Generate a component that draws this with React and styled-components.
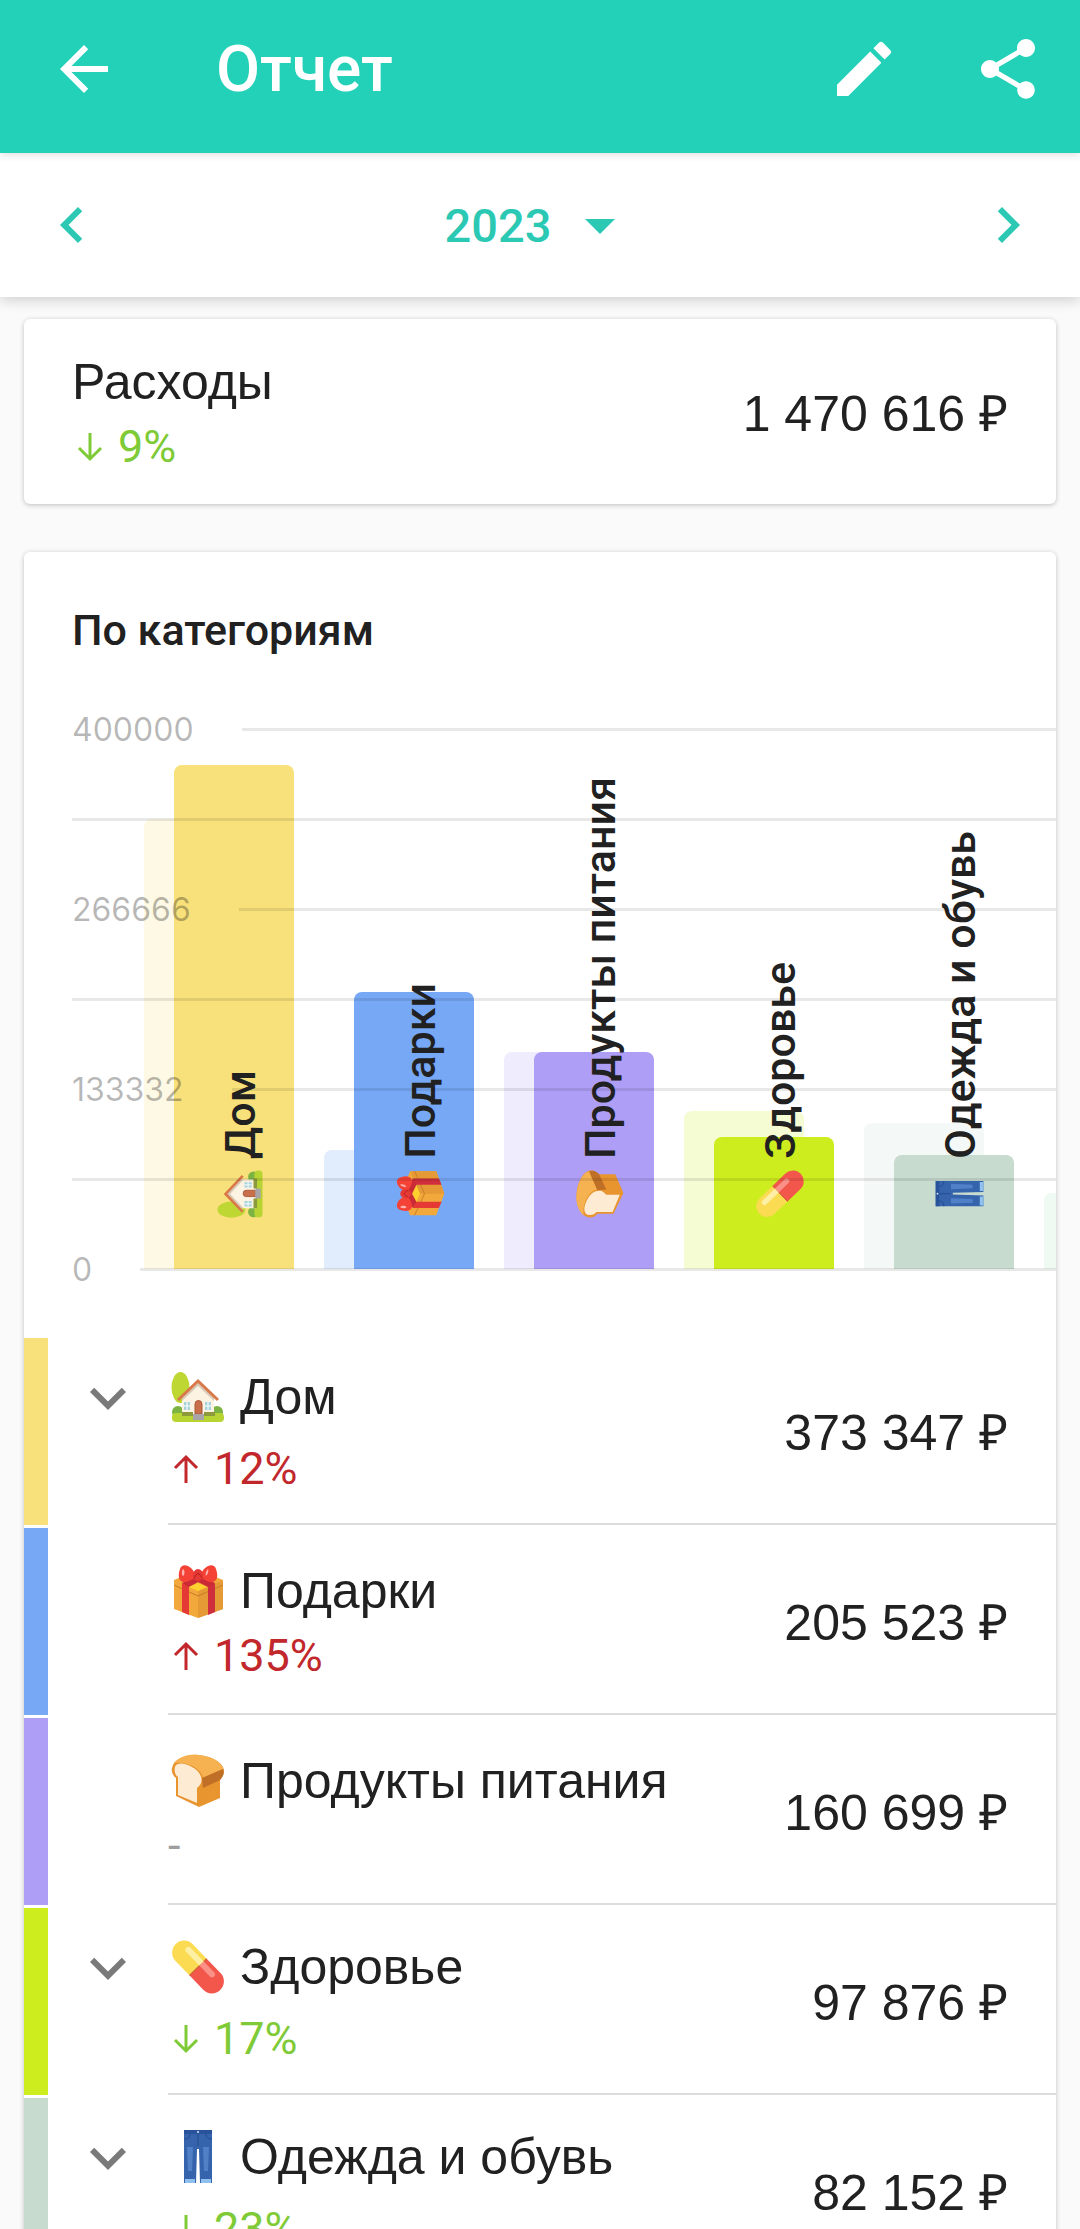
import React from "react";
import styled, { createGlobalStyle } from "styled-components";
import {
	MdArrowBack,
	MdArrowDropDown,
	MdChevronLeft,
	MdChevronRight,
	MdEdit,
	MdExpandMore,
	MdShare,
} from "react-icons/md";

const MAX_VALUE = 400000;

const ticks = ["400000", "", "266666", "", "133332", "", "0"];

const House = () => (
	<>
		<ellipse cx="12.5" cy="18.5" rx="9" ry="15.5" fill="#bfd732" />
		<circle cx="10" cy="43" r="6" fill="#7cb342" />
		<circle cx="49" cy="43" r="6" fill="#7cb342" />
		<rect x="4" y="44" width="52" height="9" rx="4" fill="#b8d432" />
		<path d="M14 46V29L30 13l16 16v17z" fill="#fdf3e3" />
		<path d="M14 32 30 17l16 15v-4L30 12 14 28z" fill="#d9cbb8" />
		<path d="M10 31 30 12l20 19" fill="none" stroke="#d9794a" strokeWidth="3" />
		<path d="M16 33h6v8h-6zM37 33h6v8h-6z" fill="#a9d3dc" />
		<path d="M19 33v8M16 37h6M40 33v8M37 37h6" stroke="#fff" strokeWidth="1" />
		<path d="M27 45V35a3 3 0 0 1 7 0v10z" fill="#c96f4a" stroke="#a9573a" strokeWidth="1" />
		<path d="M14 43h11v4H14zM36 43h11v4H36z" fill="#8d9a3c" />
		<path d="M25 45h11v6H25z" fill="#a9a4a8" />
	</>
);

const Gift = () => (
	<>
		<path d="M6 17 30 7l25 10v29L30 55 6 46z" fill="#f2a83b" />
		<path d="M30 28 55 17v29L30 55z" fill="#e59a35" />
		<path d="M6 22l24 11 25-11" fill="none" stroke="#c97b26" strokeWidth="1" />
		<path d="M14 20l7 3v29l-7-3z" fill="#e53935" />
		<path d="M40 23l7-3v29l-7 3z" fill="#cf2f3c" />
		<path d="M14 20l16-7 17 7-7 4-10-5-9 5z" fill="#c92a35" />
		<path d="M21 24l9-4 9 4-9 4z" fill="#ffd02e" />
		<path d="M28 14C25 2 14-1 12 6c-2 6-2 11 3 13 5 1 9-3 13-5z" fill="#f44336" />
		<path d="M32 14C35 2 46-1 48 6c2 6 2 11-3 13-5 1-9-3-13-5z" fill="#f44336" />
		<ellipse cx="30" cy="12" rx="5" ry="6" fill="#e53935" />
		<path d="M15 6c-2 3-1 6 0 7 2-1 2-6 0-7zM40 6c-2 2-3 5-2 7 2-2 3-5 2-7z" fill="#ffb3ad" />
		<path d="M26 15c1-2 3-4 4-5M34 15c-1-2-3-4-4-5" stroke="#b71c1c" fill="none" />
	</>
);

const Bread = () => (
	<>
		<path
			d="M4 15C6 6 18 1 30 2c14 1 26 8 26 16 0 5-3 7-4 9v18L31 54 8 43V25c-3-2-5-6-4-10z"
			fill="#e8942f"
		/>
		<path d="M6 10C12 3 22 1 30 2c13 1 24 7 25 14L35 25C34 16 20 8 6 10z" fill="#f6b250" />
		<path d="M34 25l21-9c2 5-1 9-3 11l-17 8z" fill="#bf6f26" />
		<path
			d="M7 14c2-5 10-4 17 0 8 4 12 12 8 18l-3 3v15L10 42V24c-3-2-4-6-3-10z"
			fill="#fdebd3"
		/>
	</>
);

const Pill = () => (
	<g transform="translate(30 28) rotate(46)">
		<path d="M0-12h-20a12 12 0 0 0 0 24H0z" fill="#fadb52" />
		<path d="M0-12h20a12 12 0 0 1 0 24H0z" fill="#f3564b" />
		<path d="M0-12v24" stroke="#c8642f" strokeWidth="1" />
		<path d="M-19-8H0v6h-19a3 3 0 0 1 0-6z" fill="#fdf0a4" />
		<path d="M0-8h15a3 3 0 0 1 0 6H0z" fill="#fb9086" />
	</g>
);

const Jeans = () => (
	<>
		<path d="M16 1h28v53H32l-1-34h-2l-1 34H16z" fill="#3564ad" />
		<path d="M19 18h6l-1 24h-4zM35 18h6l-1 24h-4z" fill="#5080c6" />
		<path d="M16 1h28v4H16z" fill="#28539a" />
		<path d="M17 50h10v4H17zM33 50h10v4H33z" fill="#8fc0ee" />
		<path d="M30 5v12M16 10c4 0 6-2 6-5M44 10c-4 0-6-2-6-5" stroke="#234a8c" fill="none" />
		<circle cx="30" cy="3" r="1" fill="#dfe8f5" />
	</>
);

const categories = [
	{
		name: "Дом",
		Emoji: House,
		value: 373347,
		previous: 333350,
		trend: "up",
		percent: "12%",
		amount: "373 347 ₽",
		color: "#f8e07b",
		pale: "#fdf9e4",
		expandable: true,
	},
	{
		name: "Подарки",
		Emoji: Gift,
		value: 205523,
		previous: 88200,
		trend: "up",
		percent: "135%",
		amount: "205 523 ₽",
		color: "#76a8f5",
		pale: "#e1edfc",
	},
	{
		name: "Продукты питания",
		Emoji: Bread,
		value: 160699,
		previous: 160699,
		amount: "160 699 ₽",
		color: "#ae9ef5",
		pale: "#efecfd",
	},
	{
		name: "Здоровье",
		Emoji: Pill,
		value: 97876,
		previous: 117100,
		trend: "down",
		percent: "17%",
		amount: "97 876 ₽",
		color: "#cded1e",
		pale: "#f5fbd2",
		expandable: true,
	},
	{
		name: "Одежда и обувь",
		Emoji: Jeans,
		value: 84152,
		previous: 108400,
		trend: "down",
		percent: "23%",
		amount: "82 152 ₽",
		color: "#c7dbcf",
		pale: "#f4f8f6",
		expandable: true,
	},
];

const barHeight = (value) => ({ height: `${(value / MAX_VALUE) * 100}%` });

const Trend = ({ trend, percent }) => {
	if (!trend) return <TrendLine>-</TrendLine>;
	return (
		<TrendLine $trend={trend}>
			<svg width="36" height="36" viewBox="0 0 36 36" aria-hidden="true">
				<path d={trend === "up" ? "M18 32V6M7 17 18 6l11 11" : "M18 4v26M7 19l11 11 11-11"} />
			</svg>
			{percent}
		</TrendLine>
	);
};

const App = () => {
	return (
		<Screen>
			<GlobalStyle />
			<Header>
				<IconButton aria-label="Назад">
					<MdArrowBack />
				</IconButton>
				<h1>Отчет</h1>
				<IconButton aria-label="Изменить">
					<MdEdit />
				</IconButton>
				<IconButton aria-label="Поделиться">
					<MdShare />
				</IconButton>
			</Header>
			<PeriodBar>
				<IconButton aria-label="Предыдущий год">
					<MdChevronLeft />
				</IconButton>
				<YearPicker>
					<select aria-label="Год" defaultValue="2023">
						<option>2023</option>
						<option>2022</option>
					</select>
					<MdArrowDropDown />
				</YearPicker>
				<IconButton aria-label="Следующий год">
					<MdChevronRight />
				</IconButton>
			</PeriodBar>
			<Content>
				<Card>
					<Summary>
						<div>
							<Name>Расходы</Name>
							<Trend trend="down" percent="9%" />
						</div>
						<Amount>1 470 616 ₽</Amount>
					</Summary>
				</Card>
				<Card>
					<CardTitle>По категориям</CardTitle>
					<Chart>
						<Bars>
							{categories.map(({ name, Emoji, value, previous, color, pale }) => (
								<BarGroup key={name}>
									<PreviousBar $color={pale} style={barHeight(previous)} />
									<Bar $color={color} style={barHeight(value)} />
									<BarLabel>
										<svg viewBox="0 0 60 56" aria-hidden="true">
											<Emoji />
										</svg>
										{name}
									</BarLabel>
								</BarGroup>
							))}
							<BarGroup>
								<PreviousBar $color="#eefaf2" style={barHeight(56000)} />
							</BarGroup>
						</Bars>
						<Axis>
							{ticks.map((tick, index) => (
								<Tick key={index}>
									{tick && <span>{tick}</span>}
									<i />
								</Tick>
							))}
						</Axis>
					</Chart>
					<List>
						{categories.map(({ name, Emoji, trend, percent, amount, color, expandable }) => (
							<Row key={name} $color={color}>
								<ExpandCell>
									{expandable && (
										<IconButton aria-label={`Развернуть: ${name}`}>
											<MdExpandMore />
										</IconButton>
									)}
								</ExpandCell>
								<RowBody>
									<div>
										<Name $spaced={expandable}>
											<svg viewBox="0 0 60 56" aria-hidden="true">
												<Emoji />
											</svg>
											{name}
										</Name>
										<Trend trend={trend} percent={percent} />
									</div>
									<Amount>{amount}</Amount>
								</RowBody>
							</Row>
						))}
					</List>
				</Card>
			</Content>
		</Screen>
	);
};

// # STYLED COMPONENT

const GlobalStyle = createGlobalStyle`
	* {
		box-sizing: border-box;
	}
	body {
		margin: 0;
		background: #fafafa;
		color: #212121;
		font-family: Roboto, "Liberation Sans", sans-serif;
	}
	h1, h2, p, ul {
		margin: 0;
		padding: 0;
	}
`;

const Screen = styled.div`
	height: 100vh;
	display: flex;
	flex-direction: column;
	overflow: hidden;
`;

const IconButton = styled.button`
	display: flex;
	flex: none;
	padding: 0;
	border: none;
	background: none;
	color: inherit;
	font-size: 72px;
	cursor: pointer;
`;

const Header = styled.header`
	flex: none;
	height: 153px;
	padding: 0 36px 15px 48px;
	display: flex;
	align-items: center;
	gap: 72px;
	background: #23d1b8;
	color: #fff;
	box-shadow: 0 2px 8px rgba(0, 0, 0, 0.12);
	z-index: 2;

	h1 {
		flex: 1;
		margin-left: 24px;
		font-size: 64px;
		font-weight: 500;
	}
`;

const PeriodBar = styled.nav`
	flex: none;
	height: 144px;
	padding: 0 36px;
	display: flex;
	align-items: center;
	justify-content: space-between;
	background: #fff;
	color: #2bc9b4;
	box-shadow: 0 2px 14px rgba(0, 0, 0, 0.2);
	z-index: 1;
`;

const YearPicker = styled.div`
	display: flex;
	align-items: center;
	gap: 12px;
	font-size: 72px;

	select {
		appearance: none;
		padding: 0;
		border: none;
		background: none;
		color: inherit;
		font: 500 47px Roboto, sans-serif;
	}
`;

const Content = styled.main`
	flex: 1;
	min-height: 0;
	padding: 22px 24px;
	overflow-y: auto;
	scrollbar-width: none;
	display: flex;
	flex-direction: column;
	gap: 48px;
`;

const Card = styled.section`
	flex: none;
	border-radius: 6px;
	background: #fff;
	box-shadow: 0 1px 5px rgba(0, 0, 0, 0.24);
	overflow: hidden;
`;

const Summary = styled.div`
	height: 185px;
	padding: 0 48px;
	display: flex;
	align-items: center;
	justify-content: space-between;
`;

const Name = styled.p`
	display: flex;
	align-items: center;
	gap: 12px;
	margin-bottom: ${({ $spaced }) => ($spaced ? "7px" : "0")};
	font-family: "Liberation Sans", sans-serif;
	font-size: 50px;
	line-height: 70px;

	svg {
		width: 60px;
		height: 56px;
	}
`;

const trendColors = { up: "#c1272b", down: "#7fcb37" };

const TrendLine = styled.p`
	display: flex;
	align-items: center;
	gap: 10px;
	color: ${({ $trend }) => trendColors[$trend] || "#9e9e9e"};
	font-size: 45px;
	line-height: 60px;

	path {
		fill: none;
		stroke: currentColor;
		stroke-width: 3;
	}
`;

const Amount = styled.span`
	font-family: "Liberation Sans", sans-serif;
	font-size: 50px;
	white-space: nowrap;
`;

const CardTitle = styled.h2`
	padding: 54px 48px 0;
	font-size: 43px;
	font-weight: 500;
	line-height: 48px;
`;

const Chart = styled.div`
	position: relative;
	height: 540px;
	margin: 75px 0 69px;
`;

const Bars = styled.div`
	height: 100%;
	padding-left: 120px;
	display: flex;
	gap: 30px;
	overflow: hidden;
`;

const BarGroup = styled.div`
	flex: none;
	display: grid;
	grid-template-columns: 30px 90px 30px;
	grid-template-rows: 100%;
	align-items: end;
`;

const Bar = styled.div`
	grid-area: 1 / 2 / 2 / 4;
	border-radius: 8px 8px 0 0;
	background: ${({ $color }) => $color};
`;

const PreviousBar = styled(Bar)`
	grid-area: 1 / 1 / 2 / 3;
`;

const BarLabel = styled.span`
	grid-area: 1 / 2 / 2 / 4;
	justify-self: center;
	display: flex;
	align-items: center;
	gap: 8px;
	margin-left: 12px;
	padding-top: 48px;
	writing-mode: vertical-rl;
	transform: rotate(180deg);
	font-size: 43px;
	font-weight: 500;
	line-height: 56px;
	white-space: nowrap;

	svg {
		width: 54px;
		height: 54px;
		transform: rotate(90deg);
	}
`;

/* Ticks are 40px tall, so the axis reaches 20px past the chart on both ends */
const Axis = styled.div`
	position: absolute;
	inset: -20px 0 -20px 48px;
	display: flex;
	flex-direction: column;
	justify-content: space-between;
	pointer-events: none;
`;

const Tick = styled.div`
	height: 40px;
	display: flex;
	align-items: center;
	gap: 48px;
	color: rgba(0, 0, 0, 0.28);
	font-family: Inter, sans-serif;
	font-size: 32px;

	i {
		flex: 1;
		height: 3px;
		background: rgba(0, 0, 0, 0.09);
	}
`;

const List = styled.ul`
	display: flex;
	flex-direction: column;
	gap: 3px;
	list-style: none;
`;

const Row = styled.li`
	height: 187px;
	display: flex;
	border-left: 24px solid ${({ $color }) => $color};
`;

const ExpandCell = styled.div`
	flex: none;
	width: 120px;
	padding: 24px;
	color: #7a7a7a;
`;

const RowBody = styled.div`
	flex: 1;
	padding-right: 48px;
	display: flex;
	align-items: center;
	justify-content: space-between;
	border-bottom: 2px solid #dcdcdc;
`;

export default App;
